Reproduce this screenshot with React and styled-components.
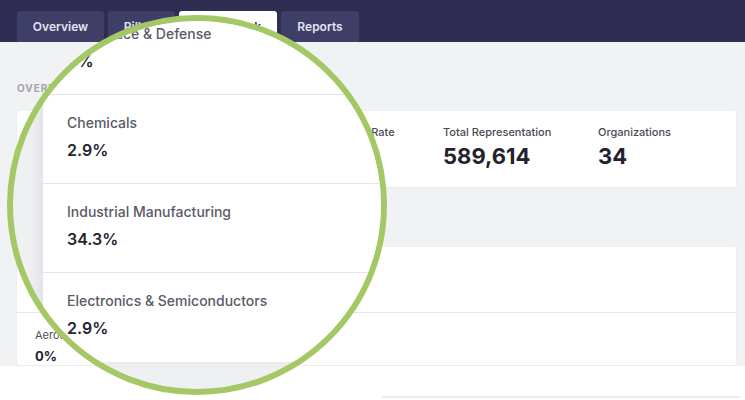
import React from 'react';
import styled, { createGlobalStyle } from 'styled-components';

const GlobalStyle = createGlobalStyle`
  body {
    margin: 0;
    background: #ffffff;
    font-family: Inter, 'Noto Sans', 'Liberation Sans', sans-serif;
  }
`;

const tabs = [
  { label: 'Overview', width: 87 },
  { label: 'Pillars', width: 67 },
  { label: 'Benchmark', width: 98, active: true },
  { label: 'Reports', width: 78 },
];

const stats = [
  { label: 'Average Score', value: '72' },
  { label: 'Participation Rate', value: '68%' },
  { label: 'Total Representation', value: '589,614' },
  { label: 'Organizations', value: '34' },
];

const industries = [
  { label: 'Aerospace & Defense', value: '0%' },
  { label: 'Chemicals', value: '2.9%' },
  { label: 'Industrial Manufacturing', value: '34.3%' },
  { label: 'Electronics & Semiconductors', value: '2.9%' },
];

export default function App() {
  return (
    <Page>
      <GlobalStyle />
      <NavBar>
        {tabs.map(tab => (
          <Tab key={tab.label} $width={tab.width} $active={tab.active}>
            {tab.label}
          </Tab>
        ))}
      </NavBar>

      <Main>
        <SectionLabel>Overview</SectionLabel>
        <StatsCard>
          {stats.map(stat => (
            <Stat key={stat.label}>
              <StatLabel>{stat.label}</StatLabel>
              <StatValue>{stat.value}</StatValue>
            </Stat>
          ))}
        </StatsCard>

        <SectionLabel $gap={31}>Industries</SectionLabel>
        <Card>
          <CardHeader>Industry Breakdown</CardHeader>
          <CardRow>
            <RowLabel>{industries[0].label}</RowLabel>
            <RowValue>{industries[0].value}</RowValue>
          </CardRow>
        </Card>
      </Main>

      <Footer>
        <FooterRule />
      </Footer>

      {/* magnifying glass laid over the page */}
      <Magnifier>
        <ZoomPanel>
          {industries.map(item => (
            <ZoomRow key={item.label}>
              <ZoomLabel>{item.label}</ZoomLabel>
              <ZoomValue>{item.value}</ZoomValue>
            </ZoomRow>
          ))}
        </ZoomPanel>
      </Magnifier>
    </Page>
  );
}

const Page = styled.div`
  position: relative;
  width: 745px;
  height: 400px;
  overflow: hidden;
  display: flex;
  flex-direction: column;
`;

const NavBar = styled.div`
  height: 42px;
  flex-shrink: 0;
  display: flex;
  align-items: flex-end;
  gap: 4px;
  padding-left: 17px;
  background: #2f2d52;
`;

const Tab = styled.div`
  width: ${p => p.$width}px;
  height: 31px;
  display: flex;
  align-items: center;
  justify-content: center;
  border-radius: 3px 3px 0 0;
  background: ${p => (p.$active ? '#ffffff' : '#3f3e66')};
  color: ${p => (p.$active ? '#2f2d52' : '#e4e4ee')};
  font-size: 12px;
  font-weight: 600;
`;

const Main = styled.div`
  height: 324px;
  flex-shrink: 0;
  box-sizing: border-box;
  padding: 40px 9px 0 17px;
  background: #f1f2f4;
`;

const SectionLabel = styled.div`
  margin-top: ${p => p.$gap || 0}px;
  margin-bottom: 17px;
  font-size: 10px;
  line-height: 12px;
  font-weight: 700;
  letter-spacing: 1px;
  text-transform: uppercase;
  color: #a3a4ae;
`;

const StatsCard = styled.div`
  height: 76px;
  box-sizing: border-box;
  display: grid;
  grid-template-columns: 267px 141px 155px 1fr;
  padding: 14px 0 0 18px;
  background: #ffffff;
  border-radius: 3px;
  box-shadow: 0 1px 3px rgba(30, 30, 60, 0.05);
`;

const Stat = styled.div`
  display: flex;
  flex-direction: column;
  gap: 3px;
`;

const StatLabel = styled.div`
  font-size: 11px;
  line-height: 15px;
  font-weight: 500;
  color: #4a4a55;
`;

const StatValue = styled.div`
  font-size: 22px;
  line-height: 27px;
  font-weight: 700;
  color: #23232f;
`;

const Card = styled.div`
  height: 118px;
  background: #ffffff;
  border-radius: 3px;
  box-shadow: 0 1px 3px rgba(30, 30, 60, 0.05);
`;

const CardHeader = styled.div`
  height: 66px;
  box-sizing: border-box;
  display: flex;
  align-items: center;
  padding-left: 18px;
  border-bottom: 1px solid #e6e7ea;
  font-size: 14px;
  font-weight: 600;
  color: #2a2a36;
`;

const CardRow = styled.div`
  display: flex;
  flex-direction: column;
  gap: 6px;
  padding: 15px 18px 0;
`;

const RowLabel = styled.div`
  font-size: 11px;
  line-height: 14px;
  color: #50505c;
`;

const RowValue = styled.div`
  font-size: 13px;
  line-height: 16px;
  font-weight: 700;
  color: #22222c;
`;

const Footer = styled.div`
  flex: 1;
  display: flex;
  align-items: flex-end;
  padding-bottom: 2px;
  background: #ffffff;
`;

const FooterRule = styled.div`
  margin-left: 382px;
  width: 358px;
  border-top: 2px solid #ececef;
`;

const Magnifier = styled.div`
  position: absolute;
  left: 7px;
  top: 15px;
  width: 380px;
  height: 380px;
  box-sizing: border-box;
  border: 6px solid #a4c866;
  border-radius: 50%;
  overflow: hidden;
  background: #eff0f2;
`;

const ZoomPanel = styled.div`
  margin: -15px 0 0 30px;
  background: #ffffff;
  box-shadow: -6px 0 10px rgba(40, 40, 70, 0.06);
`;

const ZoomRow = styled.div`
  height: 89px;
  box-sizing: border-box;
  display: flex;
  flex-direction: column;
  gap: 8px;
  padding: 19px 24px 0;
  border-bottom: 1px solid #e4e5e8;

  &:last-child {
    border-bottom: none;
  }
`;

const ZoomLabel = styled.div`
  font-size: 14px;
  line-height: 18px;
  font-weight: 500;
  color: #5a5a66;
  white-space: nowrap;
`;

const ZoomValue = styled.div`
  font-size: 16px;
  line-height: 20px;
  font-weight: 600;
  color: #24242e;
`;
